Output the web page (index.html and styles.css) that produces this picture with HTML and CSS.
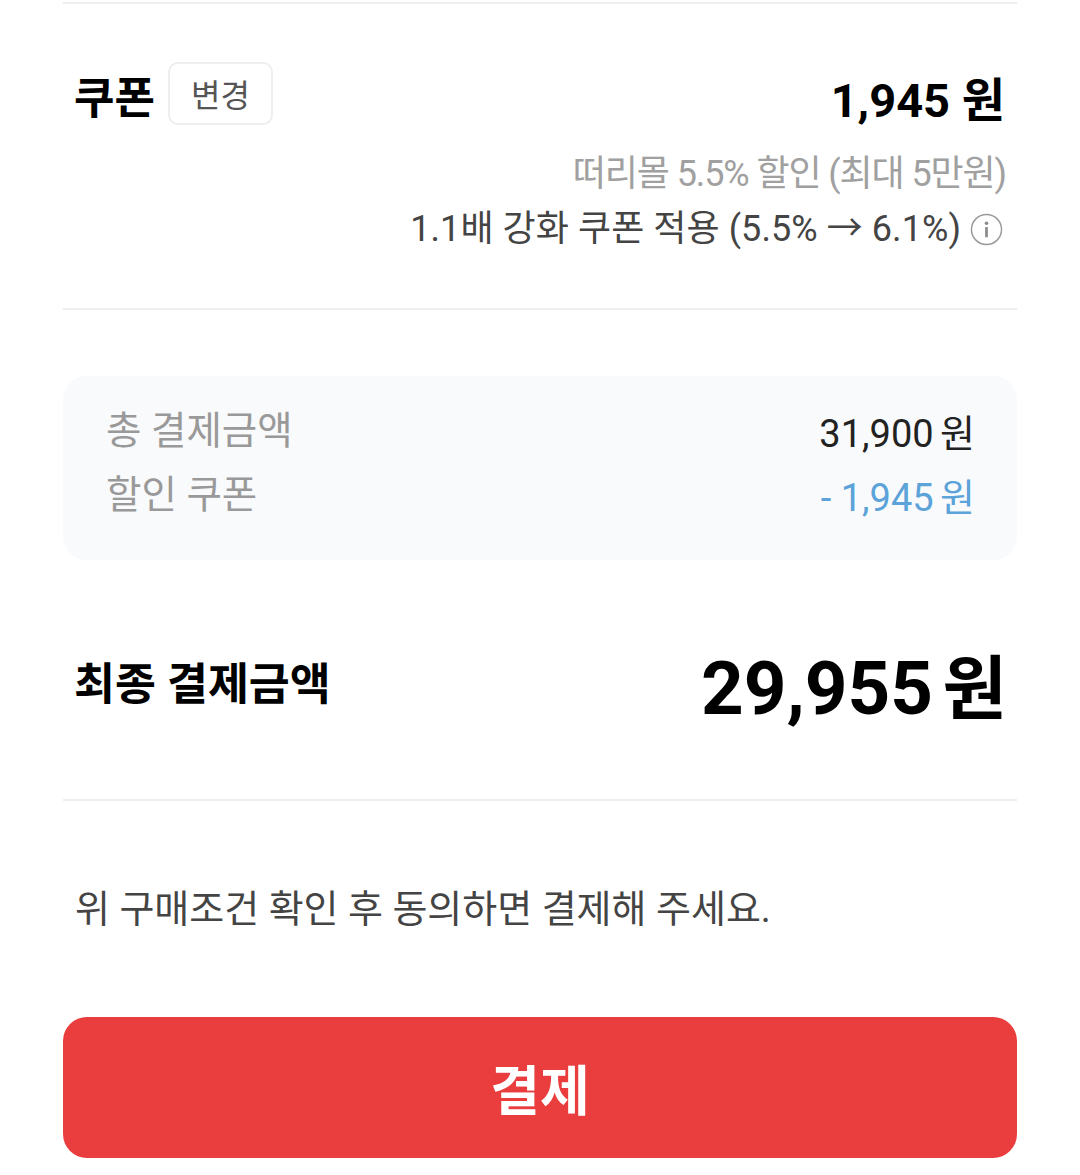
FILE: index.html
```html
<!DOCTYPE html>
<html lang="ko">
<head>
    <meta charset="UTF-8">
    <meta name="viewport" content="width=device-width, initial-scale=1.0">
    <title>결제</title>
    <link rel="stylesheet" href="styles.css">
</head>
<body>
    <div class="page">
        <section class="coupon">
            <div class="coupon-head">
                <div class="coupon-title">
                    <h2>쿠폰</h2>
                    <button class="change-btn">변경</button>
                </div>
                <div class="coupon-amount">1,945 원</div>
            </div>
            <p class="coupon-desc">떠리몰 5.5% 할인 (최대 5만원)</p>
            <p class="coupon-boost">
                <span>1.1배 강화 쿠폰 적용 (5.5% → 6.1%)</span>
                <svg class="info-icon" width="33" height="33" viewBox="0 0 34 34" aria-hidden="true">
                    <circle cx="17" cy="17" r="15.5" fill="none" stroke="#9a9a9a" stroke-width="1.5"/>
                    <circle cx="17" cy="10.5" r="1.8" fill="#8a8a8a"/>
                    <rect x="15.6" y="14.5" width="2.8" height="10.5" fill="#8a8a8a"/>
                </svg>
            </p>
        </section>

        <section class="summary">
            <div class="summary-row">
                <span class="summary-label">총 결제금액</span>
                <span class="summary-value">31,900 원</span>
            </div>
            <div class="summary-row">
                <span class="summary-label">할인 쿠폰</span>
                <span class="summary-value discount"><span class="minus">-</span> 1,945 원</span>
            </div>
        </section>

        <section class="final">
            <div class="final-label">최종 결제금액</div>
            <div class="final-amount">29,955 <span class="unit">원</span></div>
        </section>

        <p class="agree">위 구매조건 확인 후 동의하면 결제해 주세요.</p>

        <button class="pay-btn">결제</button>
    </div>
</body>
</html>
```

FILE: styles.css
```css
* {
    margin: 0;
    padding: 0;
    box-sizing: border-box;
    font-family: Roboto, "Noto Sans CJK KR", sans-serif;
}

body {
    background: #fff;
    color: #000;
}

.page {
    padding: 2px 63px 0;
}

.coupon {
    border-top: 2px solid #eeeeee;
    border-bottom: 2px solid #eeeeee;
    height: 308px;
    padding: 57px 12px 0;
}

.coupon-head {
    display: flex;
    justify-content: space-between;
    align-items: center;
    height: 64px;
}

.coupon-title {
    display: flex;
    align-items: center;
    gap: 13px;
}

.coupon-title h2 {
    font-size: 44px;
    font-weight: 700;
    line-height: 1;
    margin-left: -1px;
    padding-top: 11px;
}

.change-btn {
    width: 105px;
    height: 63px;
    background: #fff;
    border: 2px solid #eeeeee;
    border-radius: 10px;
    font-size: 32px;
    color: #555;
}

.coupon-amount {
    font-size: 47px;
    font-weight: 700;
    padding-top: 6px;
}

.coupon-desc {
    margin-top: 24px;
    margin-right: -1px;
    text-align: right;
    font-size: 36px;
    letter-spacing: -1.1px;
    line-height: 50px;
    color: #a0a0a0;
}

.coupon-boost {
    display: flex;
    justify-content: flex-end;
    align-items: center;
    gap: 9px;
    margin-top: 5px;
    margin-right: 2px;
    font-size: 36px;
    letter-spacing: 0.07px;
    line-height: 50px;
    color: #444;
}

.summary {
    margin-top: 66px;
    height: 184px;
    padding: 24px 42px 0 43px;
    background: #f9fafc;
    border-radius: 24px;
}

.summary-row {
    display: flex;
    justify-content: space-between;
    align-items: center;
    height: 62px;
    font-size: 38px;
}

.summary-label {
    color: #999;
    font-size: 38.5px;
    margin-bottom: 8px;
}

.summary-row + .summary-row .summary-label {
    margin-bottom: 4px;
}

.summary-value {
    color: #222;
    word-spacing: -3px;
    margin-bottom: 2px;
}

.summary-value.discount {
    color: #5ba3d9;
    margin-top: 2px;
    margin-bottom: 0;
}

.minus {
    margin-right: 3px;
}

.final {
    display: flex;
    justify-content: space-between;
    align-items: center;
    height: 241px;
    padding: 6px 12px 0;
    border-bottom: 2px solid #eeeeee;
}

.final-label {
    font-size: 44.5px;
    font-weight: 700;
    margin-left: -1px;
    margin-bottom: 4px;
}

.final-amount {
    font-size: 74.5px;
    font-weight: 700;
    word-spacing: -9px;
    margin-right: -2px;
    padding-top: 2px;
}

.final-amount .unit {
    font-size: 70px;
}

.agree {
    margin-top: 80px;
    padding: 0 12px;
    font-size: 38px;
    line-height: 56px;
    color: #444;
}

.pay-btn {
    display: block;
    width: 100%;
    height: 141px;
    margin-top: 80px;
    background: #ea3d3d;
    border: none;
    border-radius: 24px;
    color: #fff;
    font-size: 54px;
    font-weight: 700;
}
```
